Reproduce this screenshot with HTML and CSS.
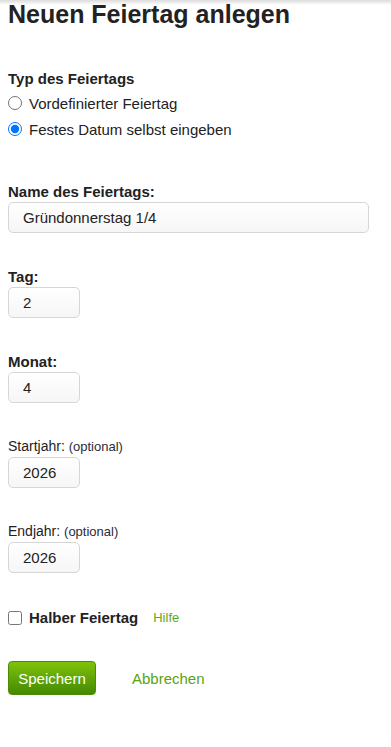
FILE: index.html
```html
<!DOCTYPE html>
<html lang="de">
<head>
  <meta charset="UTF-8">
  <title>Neuen Feiertag anlegen</title>
  <link rel="stylesheet" href="styles.css">
</head>
<body>
  <h1>Neuen Feiertag anlegen</h1>
  <form class="holiday">
    <div class="types">
      <div class="lbl">Typ des Feiertags</div>
      <label class="choice"><input type="radio" name="typ" value="pre"> Vordefinierter Feiertag</label>
      <label class="choice"><input type="radio" name="typ" value="fix" checked> Festes Datum selbst eingeben</label>
    </div>

    <div class="field">
      <label class="lbl" for="name">Name des Feiertags:</label>
      <input class="txt wide" id="name" value="Gründonnerstag 1/4">
    </div>

    <div class="field">
      <label class="lbl" for="tag">Tag:</label>
      <input class="txt short" id="tag" value="2">
    </div>

    <div class="field">
      <label class="lbl" for="monat">Monat:</label>
      <input class="txt short" id="monat" value="4">
    </div>

    <div class="field">
      <label class="lbl plain" for="start">Startjahr: <small>(optional)</small></label>
      <input class="txt short" id="start" value="2026">
    </div>

    <div class="field">
      <label class="lbl plain" for="ende">Endjahr: <small>(optional)</small></label>
      <input class="txt short" id="ende" value="2026">
    </div>

    <div class="half">
      <label class="choice bold"><input type="checkbox" name="halb"> Halber Feiertag</label>
      <a class="help" href="#">Hilfe</a>
    </div>

    <div class="actions">
      <button type="button" class="save">Speichern</button>
      <a class="cancel" href="#">Abbrechen</a>
    </div>
  </form>
</body>
</html>
```

FILE: styles.css
```css
body { margin:0; padding:0 8px; font-family:"Liberation Sans", Arial, sans-serif;
       color:#222; background:#fff linear-gradient(#dcdcdc, #fff 5px) no-repeat; }
h1 { font-size:25px; line-height:28px; margin:0 0 42px; color:#222; }

.lbl { display:block; font-size:15px; font-weight:bold; line-height:17px; }
.lbl.plain { font-weight:normal; font-size:14px; }
.lbl small { font-size:13px; color:#2b2b3a; }

.types { margin-bottom:41px; }
.types .lbl { margin-bottom:3px; }
.choice { display:flex; align-items:center; height:26px; font-size:15px; }
.choice input { margin:0 7px 0 0; width:14px; height:14px; }
.choice.bold { font-weight:bold; height:17px; }

.field { margin-bottom:35px; }
.field .lbl { margin-bottom:2px; }
.txt { display:block; box-sizing:border-box; height:31px; padding:0 14px;
       font:15px "Liberation Sans", Arial, sans-serif; color:#222;
       border:1px solid #d6d6d6; border-radius:5px;
       background:linear-gradient(#fff, #f6f6f6); }
.wide { width:361px; }
.short { width:72px; }

.half { display:flex; align-items:center; margin-top:36px; }
.help { margin-left:15px; font-size:13px; color:#66a81a; text-decoration:none; }

.actions { display:flex; align-items:center; margin-top:35px; }
.save { height:34px; width:88px; padding:0; font:15px "Liberation Sans", Arial, sans-serif;
        color:#fff; border:1px solid #4a8c06; border-radius:4px; cursor:pointer;
        background:linear-gradient(#80c20a, #438a03); }
.cancel { margin-left:36px; font-size:15px; color:#5aa313; text-decoration:none; }
```
